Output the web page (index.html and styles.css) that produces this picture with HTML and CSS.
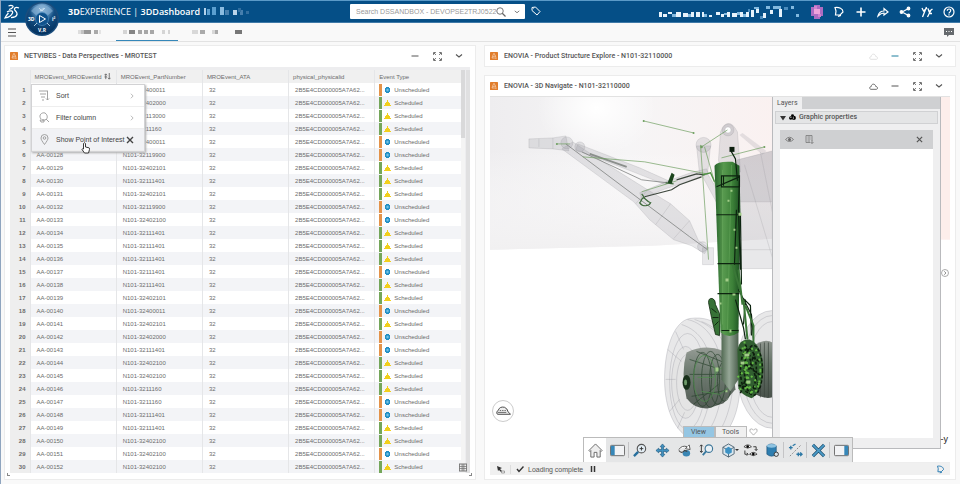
FILE: index.html
```html
<!DOCTYPE html>
<html lang="en">
<head>
<meta charset="utf-8">
<title>3DDashboard</title>
<link rel="stylesheet" href="styles.css">
</head>
<body>
<svg class="defs" aria-hidden="true">
  <symbol id="app" viewBox="0 0 16 16"><rect width="16" height="16" rx="1" fill="#e17d2b"/><path d="M8 2.500 10.500 7 12 11.500M8 2.500 5.500 7 4 12h5M6 9l5-1M9 12l4 1" fill="none" stroke="#fbe3cf" stroke-width="1.200"/></symbol>
  <symbol id="minus" viewBox="0 0 16 16"><path d="M1 8h14" stroke="currentColor" stroke-width="2"/></symbol>
  <symbol id="expand" viewBox="0 0 16 16"><path d="M1 5V1h4M11 1h4v4M15 11v4h-4M5 15H1v-4M2 2l3 3M14 2l-3 3M14 14l-3-3M2 14l3-3" fill="none" stroke="currentColor" stroke-width="1.600"/></symbol>
  <symbol id="down" viewBox="0 0 16 16"><path d="M2 5l6 5 6-5" fill="none" stroke="currentColor" stroke-width="2.200"/></symbol>
  <symbol id="right" viewBox="0 0 16 16"><path d="M5 2l6 6-6 6" fill="none" stroke="currentColor" stroke-width="1.800"/></symbol>
  <symbol id="cloud" viewBox="0 0 16 16"><path d="M3 13C0 12 1 8 4 8 4 3 11 2 12 8c4 0 4 5 1 5z" fill="none" stroke="currentColor" stroke-width="1.500"/></symbol>
  <symbol id="close" viewBox="0 0 16 16"><path d="M2 2l12 12M14 2L2 14" stroke="currentColor" stroke-width="2.800"/></symbol>
  <symbol id="lens" viewBox="0 0 20 20"><circle cx="8" cy="8" r="6.500" fill="none" stroke="currentColor" stroke-width="1.800"/><path d="M12.500 12.500l6.500 6.500" stroke="currentColor" stroke-width="2.400"/></symbol>
  <symbol id="tag" viewBox="0 0 20 20"><path d="M2 3l7-1 9 9-6 7-10-9zM5 5l1 1" fill="none" stroke="currentColor" stroke-width="2"/></symbol>
</svg>

<header class="topbar">
  <svg class="ds" viewBox="0 0 32 32" role="img" aria-label="Dassault Systèmes"><path d="M9 4c5-2 10-1 9 2-1 2-4 4-8 5M6 16c6-4 13-3 11 2-2 5-8 9-15 10 2-4 4-7 7-10M30 8c-5-2-10-1-9 3 1 3 6 5 5 10-1 4-7 6-12 6" fill="none" stroke="#fff" stroke-width="2.500"/></svg>
  <button class="compass" type="button" aria-label="Compass">
    <svg viewBox="0 0 34 34">
      <defs><radialGradient id="ball" cx="50%" cy="20%" r="80%"><stop offset="0" stop-color="#93b9d9"/><stop offset=".32" stop-color="#4c83b2"/><stop offset=".5" stop-color="#144e82"/><stop offset="1" stop-color="#02305d"/></radialGradient></defs>
      <circle cx="17" cy="17" r="17" fill="#1a4d7d"/><circle cx="17" cy="17" r="15.500" fill="url(#ball)"/>
      <path d="M6 9Q17-4 28 9L22 14Q17 9 12 14z" fill="#8db6d8" opacity=".55"/>
      <circle cx="17" cy="17" r="6.500" fill="#0f528c" stroke="#4889bd" stroke-width=".7"/>
      <path d="M14.500 13.500v7l6-3.500z" fill="none" stroke="#fff" stroke-width="1"/>
      <path d="M14 6l3 3 3-3M15 9l4-3M9 24l3-3M25 24l-3-3" stroke="#cfe4f5" stroke-width=".8" fill="none"/>
      <text x="3" y="19" class="c-t">3D</text><text x="27" y="19" class="c-t">i²</text><text x="13" y="30" class="c-t">V,R</text>
    </svg>
  </button>
  <div class="brand"><b>3D</b>EXPERIENCE | <strong>3DDashboard</strong></div>
  <svg class="mask-a" viewBox="0 0 46 9" aria-hidden="true"><path d="M0 1h2v7H0z" fill="#b4d3ec"/><path d="M3 2h3v6H3zM8 0h4v8H8z" fill="#5b9fd0"/><path d="M16 0h4v8h-4z" fill="#8abbe0"/><path d="M21 3h4v5h-4zM36 3h3v5h-3z" fill="#467fae"/><path d="M29 3h4v5h-4z" fill="#b9d4ea"/><path d="M34 1h3v4h-3zM42 4h3v3h-3z" fill="#316e9f"/></svg>
  <form class="search">
    <input type="text" aria-label="Search" placeholder="Search DSSANDBOX - DEVOPSE2TRJ0522">
    <button type="button" aria-label="Run search"><svg class="i10"><use href="#lens"/></svg></button>
    <button type="button" aria-label="Search options"><svg class="i6"><use href="#down"/></svg></button>
  </form>
  <button class="tag" type="button" aria-label="Tags"><svg class="i10"><use href="#tag"/></svg></button>
  <svg class="mask-b" viewBox="0 0 142 14" aria-hidden="true"><path d="M0 7h3v5H0zM4 9h4v3H4zM9 7h4v2H9zM17 7h5v5h-5zM24 8h5v4h-5zM32 7h3v5h-3zM37 7h4v5h-4zM43 7h2v5h-2zM50 10h3v2h-3zM57 7h4v3h-4zM62 9h3v3h-3zM68 7h3v5h-3zM73 8h5v4h-5zM81 7h3v5h-3zM87 7h3v5h-3zM92 5h3v7h-3zM97 4h3v4h-3zM104 8h3v5h-3zM111 5h3v4h-3zM120 4h3v8h-3z" fill="#e6f2fb"/><path d="M13 9h4v3h-4zM29 9h3v3h-3zM45 9h3v3h-3zM65 8h3v2h-3zM78 7h3v3h-3zM84 9h3v3h-3zM95 2h5v2h-5zM107 1h4v3h-4zM114 1h8v3h-8zM132 1h3v3h-3zM137 9h3v3h-3z" fill="#82b9df"/><path d="M101 11h3v3h-3zM125 2h4v3h-4zM89 4h2v3h-2z" fill="#4b8cbd"/></svg>
  <nav class="tools" aria-label="Account">
    <button type="button" aria-label="Profile"><svg class="i14" viewBox="0 0 14 14"><path d="M4 0h6v2h3v9h-3v3H4v-3H1V2h3z" fill="#ad6cc2"/><path d="M4 4h6v5H4z" fill="#f0a3dc"/><path d="M4 1h3v3H4zM8 9h3v3H8z" fill="#d184cf"/></svg></button>
    <button type="button" aria-label="Notifications"><svg class="i12" viewBox="0 0 12 12"><path d="M2 1.500c4-.5 8 1 8 4.500L7 9H2.500L3 5zM5 10.500l3-1" /></svg></button>
    <button type="button" aria-label="Add"><svg class="i12" viewBox="0 0 12 12"><path d="M6 1.500v9M1.500 6h9" stroke-width="1.600"/></svg></button>
    <button type="button" aria-label="Share"><svg class="i12" viewBox="0 0 12 12"><path d="M1 10c1-4 3-5 6-5V2.500L11 6 7 9V7C4 7 3 8 1 10z"/></svg></button>
    <button type="button" aria-label="Connections"><svg class="i12" viewBox="0 0 12 12"><path d="M9.500 2.500 3 6l6.500 3.500"/><circle cx="9.500" cy="2.500" r="1.300" fill="#fff"/><circle cx="2.500" cy="6" r="1.300" fill="#fff"/><circle cx="9.500" cy="9.500" r="1.300" fill="#fff"/></svg></button>
    <button type="button" aria-label="Communities"><svg class="i12" viewBox="0 0 12 12"><path d="M1 2l1.500 3L6 2M5.500 1 1.500 11M7 2.500l1 3L11.500 3M10 4 6.500 11M9 7.500h2" stroke-width="1.300"/></svg></button>
    <button type="button" aria-label="Help"><svg class="i12" viewBox="0 0 12 12"><circle cx="6" cy="6" r="5"/><path d="M4.300 4.800c0-2.500 3.600-2.300 3.400-.1C7.600 6 6 6 6 7.500M6 8.300v1.200"/></svg></button>
  </nav>
</header>

<nav class="tabs" aria-label="Dashboard tabs">
  <button class="burger" type="button" aria-label="Menu"><svg viewBox="0 0 8 9"><path d="M0 1h8M0 4.500h8M0 8h8" stroke="#555" stroke-width="1.200"/></svg></button>
  <a class="tab t1" href="#" aria-label="Tab one"><svg viewBox="0 0 24 4"><path d="M0 0h3v4H0z" fill="#ddd"/><path d="M3 0h3v4H3z" fill="#c3c3c3"/><path d="M6 0h7v4H6z" fill="#979797"/><path d="M16 0h4v4h-4z" fill="#aaa"/><path d="M21 0h2v4h-2z" fill="#e4e4e4"/></svg></a>
  <a class="tab t2" href="#" aria-current="page" aria-label="Tab two"><svg viewBox="0 0 48 4"><path d="M0 0h4v4H0zM39 0h3v4h-3zM45 0h2v4h-2z" fill="#d5d5d5"/><path d="M6 0h6v4H6z" fill="#858585"/><path d="M15 0h4v4h-4zM21 0h4v4h-4zM27 0h4v4h-4z" fill="#a7a7a7"/></svg></a>
  <a class="tab t3" href="#" aria-label="Tab three"><svg viewBox="0 0 26 4"><path d="M0 0h6v4H0zM20 0h3v4h-3z" fill="#d8d8d8"/><path d="M8 0h5v4H8zM23 0h3v4h-3z" fill="#aaa"/></svg></a>
  <a class="tab t4" href="#" aria-label="Tab four"><svg viewBox="0 0 7 4"><path d="M0 0h7v4H0z" fill="#777"/></svg></a>
  <button class="chat" type="button" aria-label="Comments"><svg viewBox="0 0 10 9"><path d="M0 0h10v7H5L3 9V7H0z" fill="#666a6e"/><path d="M2 3.500h1M4.500 3.500h1M7 3.500h1" stroke="#fff"/></svg></button>
</nav>

<main class="board">
  <section class="widget left">
    <header class="w-head"><svg class="i8"><use href="#app"/></svg><h2>NETVIBES - Data Perspectives - MROTEST</h2>
      <button type="button" aria-label="Minimize"><svg class="i8"><use href="#minus"/></svg></button><button type="button" aria-label="Maximize"><svg class="i9"><use href="#expand"/></svg></button><button type="button" aria-label="Widget menu"><svg class="i8"><use href="#down"/></svg></button></header>
    <div class="grid">
      <table>
        <colgroup><col class="c-n"><col><col><col><col><col></colgroup>
        <thead><tr><th></th><th>MROEvent_MROEventId <svg class="sort" viewBox="0 0 8 8"><path d="M2 1v6M.5 2.500 2 1 3.500 2.500M.5 4.500h3M6 0v7M4.500 5.500 6 7l1.500-1.500" fill="none" stroke="#666"/></svg></th><th>MROEvent_PartNumber</th><th>MROEvent_ATA</th><th>physical_physicalid</th><th>Event Type</th></tr></thead>
        <tbody>
          <tr><td>1</td><td></td><td>N101-32400011</td><td>32</td><td>2B5E4CD000005A7A62...</td><td class="u">Unscheduled</td></tr>
          <tr><td>2</td><td></td><td>N101-32402000</td><td>32</td><td>2B5E4CD000005A7A62...</td><td class="s">Scheduled</td></tr>
          <tr><td>3</td><td></td><td>N101-32113000</td><td>32</td><td>2B5E4CD000005A7A62...</td><td class="s">Scheduled</td></tr>
          <tr><td>4</td><td></td><td>N101-3211160</td><td>32</td><td>2B5E4CD000005A7A62...</td><td class="s">Scheduled</td></tr>
          <tr><td>5</td><td></td><td>N101-32400011</td><td>32</td><td>2B5E4CD000005A7A62...</td><td class="u">Unscheduled</td></tr>
          <tr><td>6</td><td>AA-00128</td><td>N101-32119900</td><td>32</td><td>2B5E4CD000005A7A62...</td><td class="u">Unscheduled</td></tr>
          <tr><td>7</td><td>AA-00129</td><td>N101-32402101</td><td>32</td><td>2B5E4CD000005A7A62...</td><td class="s">Scheduled</td></tr>
          <tr><td>8</td><td>AA-00130</td><td>N101-32111401</td><td>32</td><td>2B5E4CD000005A7A62...</td><td class="s">Scheduled</td></tr>
          <tr><td>9</td><td>AA-00131</td><td>N101-32402101</td><td>32</td><td>2B5E4CD000005A7A62...</td><td class="s">Scheduled</td></tr>
          <tr><td>10</td><td>AA-00132</td><td>N101-32119900</td><td>32</td><td>2B5E4CD000005A7A62...</td><td class="u">Unscheduled</td></tr>
          <tr><td>11</td><td>AA-00133</td><td>N101-32402100</td><td>32</td><td>2B5E4CD000005A7A62...</td><td class="u">Unscheduled</td></tr>
          <tr><td>12</td><td>AA-00134</td><td>N101-32111401</td><td>32</td><td>2B5E4CD000005A7A62...</td><td class="s">Scheduled</td></tr>
          <tr><td>13</td><td>AA-00135</td><td>N101-32111401</td><td>32</td><td>2B5E4CD000005A7A62...</td><td class="s">Scheduled</td></tr>
          <tr><td>14</td><td>AA-00136</td><td>N101-32111401</td><td>32</td><td>2B5E4CD000005A7A62...</td><td class="s">Scheduled</td></tr>
          <tr><td>15</td><td>AA-00137</td><td>N101-32111401</td><td>32</td><td>2B5E4CD000005A7A62...</td><td class="u">Unscheduled</td></tr>
          <tr><td>16</td><td>AA-00138</td><td>N101-32111401</td><td>32</td><td>2B5E4CD000005A7A62...</td><td class="s">Scheduled</td></tr>
          <tr><td>17</td><td>AA-00139</td><td>N101-32402101</td><td>32</td><td>2B5E4CD000005A7A62...</td><td class="s">Scheduled</td></tr>
          <tr><td>18</td><td>AA-00140</td><td>N101-32400011</td><td>32</td><td>2B5E4CD000005A7A62...</td><td class="u">Unscheduled</td></tr>
          <tr><td>19</td><td>AA-00141</td><td>N101-32402101</td><td>32</td><td>2B5E4CD000005A7A62...</td><td class="s">Scheduled</td></tr>
          <tr><td>20</td><td>AA-00142</td><td>N101-32402000</td><td>32</td><td>2B5E4CD000005A7A62...</td><td class="u">Unscheduled</td></tr>
          <tr><td>21</td><td>AA-00143</td><td>N101-32111401</td><td>32</td><td>2B5E4CD000005A7A62...</td><td class="u">Unscheduled</td></tr>
          <tr><td>22</td><td>AA-00144</td><td>N101-32402100</td><td>32</td><td>2B5E4CD000005A7A62...</td><td class="s">Scheduled</td></tr>
          <tr><td>23</td><td>AA-00145</td><td>N101-32402100</td><td>32</td><td>2B5E4CD000005A7A62...</td><td class="s">Scheduled</td></tr>
          <tr><td>24</td><td>AA-00146</td><td>N101-3211160</td><td>32</td><td>2B5E4CD000005A7A62...</td><td class="s">Scheduled</td></tr>
          <tr><td>25</td><td>AA-00147</td><td>N101-3211160</td><td>32</td><td>2B5E4CD000005A7A62...</td><td class="u">Unscheduled</td></tr>
          <tr><td>26</td><td>AA-00148</td><td>N101-32111401</td><td>32</td><td>2B5E4CD000005A7A62...</td><td class="u">Unscheduled</td></tr>
          <tr><td>27</td><td>AA-00149</td><td>N101-32111401</td><td>32</td><td>2B5E4CD000005A7A62...</td><td class="s">Scheduled</td></tr>
          <tr><td>28</td><td>AA-00150</td><td>N101-32402100</td><td>32</td><td>2B5E4CD000005A7A62...</td><td class="s">Scheduled</td></tr>
          <tr><td>29</td><td>AA-00151</td><td>N101-32402100</td><td>32</td><td>2B5E4CD000005A7A62...</td><td class="u">Unscheduled</td></tr>
          <tr><td>30</td><td>AA-00152</td><td>N101-32402100</td><td>32</td><td>2B5E4CD000005A7A62...</td><td class="s">Scheduled</td></tr>
        </tbody>
      </table>
      <div class="rail"><span></span></div>
      <div class="rail outer"></div>
      <div class="menu">
        <button type="button"><svg class="i11" viewBox="0 0 11 11"><path d="M0 1h9M1 4h6M2 7h4M3 10h2M8.500 1v9M7 8.500l1.500 1.500L10 8.500"/></svg>Sort<svg class="i6 end"><use href="#right"/></svg></button>
        <button type="button"><svg class="i11" viewBox="0 0 11 11"><path d="M2 7C-1 3 3 0 6 1c3 2 3 6 0 7H3M7 7l3 3M1 8h4v2H2z"/></svg>Filter column<svg class="i6 end"><use href="#right"/></svg></button>
        <button type="button" class="hover"><svg class="i11" viewBox="0 0 11 11"><path d="M5.500 10.500C3 7 2 5.500 2 4a3.500 3.500 0 0 1 7 0c0 1.500-1 3-3.500 6.500z"/><circle cx="5.500" cy="4" r="1.300"/></svg>Show Point of Interest<svg class="i8 x"><use href="#close"/></svg></button>
        <svg class="hand" viewBox="0 0 9 12"><path d="M2.500 7V1.500q1-1.500 2 0V5l3.500.8q.7 0 .5 1.700L7.500 11H3.500L1 7.500q.3-1.200 1.500-.5z" fill="#fff" stroke="#222" stroke-width=".9"/></svg>
      </div>
      <svg class="corner" viewBox="0 0 9 9"><path d="M0 0h9v9H0z" fill="#777"/><path d="M1 1h2v2H1zM4 1h1v2H4zM6 1h2v2H6zM1 4h2v1H1zM4 4h1v1H4zM6 4h2v1H6zM1 6h2v2H1zM4 6h1v2H4zM6 6h2v2H6z" fill="#eee"/></svg>
    </div>
    <i class="grip gl"></i><i class="grip gr"></i>
  </section>

  <div class="col">
    <section class="widget">
      <header class="w-head"><svg class="i8"><use href="#app"/></svg><h2>ENOVIA - Product Structure Explore - N101-32110000</h2>
        <button type="button" class="faint" aria-label="Connection"><svg class="i9"><use href="#cloud"/></svg></button><button type="button" class="blue" aria-label="Restore"><svg class="i8"><use href="#minus"/></svg></button><button type="button" aria-label="Maximize"><svg class="i9"><use href="#expand"/></svg></button><button type="button" aria-label="Widget menu"><svg class="i8"><use href="#down"/></svg></button></header>
    </section>
    <section class="widget nav3d">
      <header class="w-head"><svg class="i8"><use href="#app"/></svg><h2>ENOVIA - 3D Navigate - N101-32110000</h2>
        <button type="button" aria-label="Connection"><svg class="i9"><use href="#cloud"/></svg></button><button type="button" aria-label="Minimize"><svg class="i8"><use href="#minus"/></svg></button><button type="button" aria-label="Maximize"><svg class="i9"><use href="#expand"/></svg></button><button type="button" aria-label="Widget menu"><svg class="i8"><use href="#down"/></svg></button></header>
      <div class="stage">
        <svg class="model" viewBox="490 97 461 366" preserveAspectRatio="xMinYMin slice" role="img" aria-label="Landing gear model">
          <defs>
            <linearGradient id="sky"><stop offset="0" stop-color="#eeedef"/><stop offset=".3" stop-color="#f6f5f6"/><stop offset=".7" stop-color="#fbf0ef"/><stop offset="1" stop-color="#fdeeec"/></linearGradient>
            <radialGradient id="glow"><stop offset="0" stop-color="#fff"/><stop offset="1" stop-color="#fff" stop-opacity="0"/></radialGradient>
            <linearGradient id="fade" x1="0" y1="0" x2="0" y2="1"><stop offset="0" stop-color="#fff" stop-opacity="0"/><stop offset=".7" stop-color="#f5f4f5" stop-opacity=".7"/><stop offset="1" stop-color="#f1f0f1"/></linearGradient>
            <linearGradient id="tube"><stop offset="0" stop-color="#27632c"/><stop offset=".35" stop-color="#57994e"/><stop offset=".7" stop-color="#3c8038"/><stop offset="1" stop-color="#1c4f21"/></linearGradient>
            <linearGradient id="chrome"><stop offset="0" stop-color="#526a53"/><stop offset=".45" stop-color="#96a797"/><stop offset="1" stop-color="#4c604e"/></linearGradient>
            <linearGradient id="drum" x1="0" y1="0" x2="0" y2="1"><stop offset="0" stop-color="#8f968f"/><stop offset=".4" stop-color="#667468"/><stop offset="1" stop-color="#49524b"/></linearGradient>
          </defs>
          <path d="M490 97h461v143l-178-1-120 7-163 4z" fill="url(#sky)"/>
          <ellipse cx="597" cy="108" rx="60" ry="48" fill="url(#glow)"/>
          <path d="M490 150h283v89l-120 7-163 4z" fill="url(#fade)"/>
          <g fill="#8d8d96" fill-opacity=".2" stroke="#8a8a92" stroke-opacity=".35" stroke-width=".6">
            <path d="M738 160 773 151v118H738z"/><path d="M738 160 773 151v51h-35z" stroke="none"/><path d="M745 165l28 93M761 152l12 60M738 202h35M738 250h35"/>
            <path d="M740 135l3-2 24 18-4 4z" stroke="none"/>
            <path d="M719 160l2-28q8-17 17 0l3 40h-20z"/><circle cx="728.500" cy="130" r="6"/><circle cx="728.500" cy="130" r="3" fill="#fff" fill-opacity="1"/>
            <path d="M529 139l24-1 13-2 3 15-16-2-24-1z"/><path d="M539 139v8M553 138v11"/>
            <circle cx="567" cy="143" r="6"/><circle cx="580" cy="147" r="5"/>
            <path d="M562 149 573 142 600 160 648 190 671 204 690 221 699 241 709 248 705 254 692 246 674 240 650 220 634 202 600 177z"/>
            <path d="M648 190l-12 14M671 204l-15 21M690 221l-16 18"/>
            <path d="M578 144l62 24 29 13-3 4-30-12-60-23z"/>
            <path d="M640 193l26-11 25-9 16-4 2 5-22 8-24 8-21 9z"/>
            <circle cx="704" cy="145" r="7.500"/><path d="M697 146l3 28h8l3-28z"/><path d="M708 174l17 28-5 6-18-33z"/>
            <path d="M703 248h11v17h-11z"/><circle cx="703" cy="247" r="5"/>
          </g>
          <path d="M566 144 690 237 708 250M582 152l60 28 26 3" fill="none" stroke="#7f8280" stroke-width=".8"/>
          <path d="M590 154l37 13" stroke="#8b8f8c" stroke-width="2"/>
          <g fill="none" stroke="#6f9f60" stroke-width=".7"><path d="M644 121l50 12M583 157l62 5 62 12M701 145l8 115M705 147l20 70M702 147l26-17M722 158l43-11M557 144l13 0M642 192l35-11"/></g>
          <g fill="#6f9f60"><circle cx="644" cy="121" r="1"/><circle cx="694" cy="133" r="1"/><circle cx="765" cy="147" r="1"/><circle cx="702" cy="147" r="1.300"/><circle cx="557" cy="144" r="1"/></g>
          <path d="M641 202c3-9 5 0 10 1-2 4-8 4-11 0zM642 194l3 4M666 183l8 1" fill="none" stroke="#3f6a3c" stroke-width="1.200"/>
          <path d="M668 183l4-10 3 2-3 9z" fill="#1c451d"/>
          <path d="M645 197l27-7 8-5 22-8M677 180l20-6 8 1" fill="none" stroke="#3c463c" stroke-width="1.200"/>
          <path d="M703 175l8-2 4 9" stroke="#4d9141" stroke-width="1.300" fill="none"/>
          <g fill="#c7c7cb" fill-opacity=".42" stroke="#8b8b93" stroke-opacity=".42" stroke-width=".7">
            <ellipse cx="773" cy="370" rx="36" ry="59"/><ellipse cx="773" cy="370" rx="30" ry="54" fill="none"/><ellipse cx="773" cy="370" rx="24" ry="48" fill="none"/>
            <path d="M690 319c28-4 45 15 50 53 3 30-6 58-20 67h-30c-17-9-26-34-25-64 1-29 10-53 25-56z"/>
            <path d="M695 320c20 6 37 25 39 54 0 33-11 58-20 65M702 322c20 8 36 25 37 53M688 320c19 4 34 25 35 54 0 33-9 55-20 64M682 325c19 6 30 24 30 50 0 33-9 50-16 62" fill="none"/>
            <ellipse cx="688" cy="382" rx="18" ry="48" fill="none"/><ellipse cx="686" cy="383" rx="14" ry="36" fill="#ddd"/><ellipse cx="688" cy="383" rx="11" ry="28" fill="none"/>
            <path d="M668 350l14 12M666 380h10M670 412l10-12M678 429l7-16M676 332l8 18" fill="none"/>
          </g>
          <path d="M756 345q10-6 17-2v55q-8 2-17-3z" fill="url(#drum)"/><path d="M761 344v54M765 343v55M769 343v55" stroke="#3b443c" stroke-width=".7"/>
          <path d="M687 353q18-9 36-2l10 18 3 21-12 14-15 5q-14 1-22-10-6-26 0-46z" fill="url(#drum)" opacity=".93"/>
          <g fill="none" stroke="#26402a" stroke-width=".8" opacity=".8"><ellipse cx="703" cy="380" rx="9" ry="27"/><ellipse cx="711" cy="380" rx="9" ry="28"/><ellipse cx="718" cy="380" rx="8" ry="25"/><ellipse cx="725" cy="382" rx="7" ry="20"/><path d="M690 360l25 8M692 397l35-6M697 352l30 12M690 375h38M694 405l25-20"/></g>
          <g fill="none" stroke="#4e8f4c" stroke-width=".9" opacity=".8"><ellipse cx="705" cy="379" rx="11" ry="23"/><path d="M698 378h16l5-8 5-2M702 392l18 3 11-8"/></g>
          <ellipse cx="687" cy="383" rx="4" ry="7.500" fill="#18301a"/><ellipse cx="686" cy="383" rx="1.500" ry="3" fill="#6d9a69"/>
          <path d="M722 330h17v50l-8 12-9-12z" fill="url(#chrome)"/>
          <path d="M715 166q3-5 18-4l7 4 1 47-2 120q-9 7-18 0z" fill="url(#tube)"/>
          <path d="M723 170v155M732 165l-4 165" stroke="#76b568" stroke-width=".6" opacity=".7"/>
          <g fill="none" stroke="#0c230f" stroke-width="1.200"><path d="M722 176h18v11h-18zM724 176v10M717 187l23-10M717 215h24M718 264h23M718 294h22M722 331h17"/><path d="M732 148v4l4 7 2 22M740 180l-1 30 2 60M737 210l-2 55M741 215l1 70M739 290l13 25 2 24M742 297l9 9 1 30M736 300l8 28 2 12M746 300l-2 25"/></g>
          <path d="M730 147h5v5h-5z" fill="#0c1e0e"/>
          <path d="M709 303q0-5 4-4 3 1 3 6l4 9v22l-4-1-4-17z" fill="#377237" stroke="#10280f" stroke-width=".8"/><path d="M712 309l5 4M713 318h6M715 326l4-4" stroke="#10280f"/>
          <path d="M746 306l8 20v18M733 265l9 30M739 270l4 35M744 300l4 40" stroke="#3a7737" stroke-width="2" fill="none"/>
          <path d="M738 350q2-11 12-10 12 4 14 28-1 25-12 31-10-3-13-10z" fill="#315e30"/>
          <g fill="none" stroke="#0d1d0d" stroke-width="1.600" stroke-dasharray="3 2"><ellipse cx="754" cy="371" rx="9" ry="25"/><ellipse cx="749" cy="371" rx="8" ry="22"/><path d="M740 350l20 12M742 362l19 14M739 386l20 4M741 394l14-40M746 345l14 45"/></g>
          <g fill="none" stroke="#63b944" stroke-width="2" stroke-dasharray="2 3"><ellipse cx="754" cy="371" rx="7" ry="22"/><path d="M743 348l9 48M745 342l3 50M738 378l18-17M741 366l20 20M740 390l16-3"/></g>
          <g fill="#a2cc88"><path d="M728 200h2v2h-2zM734 229h2v2h-2zM726 279h3v3h-3zM730 330h2v3h-2zM745 354h5v3h-5zM741 362h4v3h-4zM739 213h3v3h-3zM731 190h2v2h-2zM736 247h2v2h-2zM733 294h3v2h-3zM720 303h2v2h-2zM716 368h3v4h-3zM747 381h4v3h-4zM726 391h2v2h-2z"/></g>
          <path d="M942 97h9v142h-9z" fill="#fdeeeb"/>
        </svg>
        <aside class="layers">
          <div class="l-tabs"><button type="button">Layers</button></div>
          <button class="acc" type="button"><svg class="i6" viewBox="0 0 6 6"><path d="M0 1h6L3 5.500z" fill="#333"/></svg><svg class="i7" viewBox="0 0 8 8"><circle cx="2" cy="4.500" r="2"/><circle cx="5.500" cy="4.500" r="2.400"/><circle cx="4" cy="2" r="1.700"/><path d="M1 4h2M5 3v3" stroke="#ddd" stroke-width=".7"/></svg>Graphic properties</button>
          <div class="l-body">
            <div class="l-tools">
              <button type="button" aria-label="Visibility"><svg class="i9" viewBox="0 0 9 9"><path d="M.5 4.500q4-4.500 8 0-4 4-8 0z" fill="none" stroke="#777" stroke-width=".9"/><circle cx="4.500" cy="4.500" r="1.500" fill="#666"/></svg></button>
              <button type="button" aria-label="Add layer"><svg class="i9" viewBox="0 0 9 9"><path d="M1 .5h6v5M1 .5v7h4M2.500 2h3M2.500 4h3M2.500 6H5M7 5v3.500M5.500 7 7 8.500 8.500 7" fill="none" stroke="#777" stroke-width=".8"/></svg></button>
              <button class="push" type="button" aria-label="Close"><svg class="i7"><use href="#close"/></svg></button>
            </div>
          </div>
        </aside>
        <span class="axis">-y</span>
        <button class="next" type="button" aria-label="Next"><svg viewBox="0 0 8 8"><circle cx="4" cy="4" r="3.500" fill="#fff" stroke="#888" stroke-width=".7"/><path d="M3.200 2.300 5 4 3.200 5.700" fill="none" stroke="#777" stroke-width=".8"/></svg></button>
        <button class="helmet" type="button" aria-label="Assistant"><svg viewBox="0 0 16 10"><path d="M1 8q-1-2 1.500-4Q4 0 9 1q3 1 4 5l2.500 2.500H2z" fill="#eee" stroke="#444" stroke-width="1"/><path d="M4 4.500h1.500M6.500 4.500H8M9 4.500h1.500M2 6.500h9" stroke="#555" stroke-width=".9"/></svg></button>
        <div class="bar">
          <div class="b-tabs"><button type="button" class="on">View</button><button type="button">Tools</button><svg class="heart" viewBox="0 0 10 9"><path d="M5 8 1.200 4Q0 1 2.500 1 4 1 5 2.500 6 1 7.500 1 10 1 8.800 4z" fill="#fff" stroke="#999" stroke-width=".8"/></svg></div>
          <div class="b-row">
            <button class="home" type="button" aria-label="Home"><svg viewBox="0 0 16 16"><path d="M1 8 8 1l7 7-1 1-1-1v7H9.500v-5h-3v5H3V8L2 9z" fill="#eee" stroke="#666"/></svg></button>
            <button type="button" aria-label="Left panel"><svg viewBox="0 0 16 16"><rect x=".5" y="2.500" width="15" height="11" rx="1" fill="#f2f3f5" stroke="#666"/><path d="M1 3h4v10H1z" fill="#3687b8"/></svg></button>
            <hr>
            <button type="button" aria-label="Fit all"><svg viewBox="0 0 16 16"><circle cx="9" cy="6" r="4.500" fill="#e3edf4" stroke="#555" stroke-width="1.200"/><path d="M7 6h4M9 4v4" stroke="#333"/><path d="M5.500 9.500 1 14" stroke="#276f9d" stroke-width="2.500"/></svg></button>
            <button type="button" aria-label="Pan"><svg viewBox="0 0 16 16"><path d="M8 1l2.500 3H9v3h3V5.500L15 8l-3 2.500V9H9v3h1.500L8 15l-2.500-3H7V9H4v1.500L1 8l3-2.500V7h3V4H5.500z" fill="#4294c4" stroke="#1d587e" stroke-width=".7"/></svg></button>
            <button type="button" aria-label="Rotate"><svg viewBox="0 0 16 16"><path d="M2 7q3-5 9-3l-2 2 5 1-1-5-1 1" fill="#fff" stroke="#555"/><ellipse cx="10" cy="11" rx="4" ry="3.500" fill="#3a86b4"/><path d="M2 8q3 4 6 0l3 1" fill="none" stroke="#444" stroke-width="1.300"/></svg></button>
            <button type="button" aria-label="Zoom"><svg viewBox="0 0 16 16"><circle cx="10.500" cy="6" r="4" fill="#eaf1f6" stroke="#3d7698" stroke-width="1.200"/><path d="M7.500 9 4 13" stroke="#37799f" stroke-width="2"/><path d="M2.500 2v8M1 3.500 2.500 2 4 3.500M1 8.500 2.500 10 4 8.500" fill="none" stroke="#333"/></svg></button>
            <button type="button" aria-label="Views"><svg viewBox="0 0 16 16"><path d="M8 1l6 3.500v7L8 15l-6-3.500v-7zM2 4.500 8 8l6-3.500M8 8v7" fill="#d9e6ee" stroke="#536977"/><path d="M8 4l3.500 2v4L8 12l-3.500-2V6z" fill="#3d92c4"/></svg><i class="drop"></i></button>
            <button type="button" aria-label="Hide or show"><svg viewBox="0 0 16 16"><path d="M1 4q4-4 8 0-4 3-8 0zM7 12q4-4 8 0-4 3-8 0z" fill="#fff" stroke="#444"/><circle cx="5" cy="3.800" r="1.400"/><circle cx="11" cy="11.800" r="1.400"/><path d="M11 4h3v4M12.500 6.500 14 8l1.500-1.500M2 8v4h3M4 10.500 5.500 12 4 13.500" fill="none" stroke="#333"/></svg></button>
            <button type="button" aria-label="Data"><svg viewBox="0 0 16 16"><path d="M2 3q5-4 10 0v9q-5 4-10 0z" fill="#2e7eb0" stroke="#1e5377" stroke-width=".7"/><ellipse cx="7" cy="3" rx="5" ry="2" fill="#8fc3e1"/><circle cx="12" cy="12" r="2.300" fill="#d8e2e9" stroke="#333"/></svg></button>
            <hr>
            <button type="button" aria-label="Measure"><svg viewBox="0 0 16 16"><path d="M2 14 14 2" stroke="#888" stroke-dasharray="2 1.500"/><path d="M1 5h4M3 3v4M5 3l3-2M9 12h6M11 10v4M13 10l2 2-2 2" stroke="#2d78a5" stroke-width="1.400" fill="none"/></svg></button>
            <hr>
            <button type="button" aria-label="Section"><svg viewBox="0 0 16 16"><path d="M2 2l12 12M14 2 2 14" stroke="#1f4f6e" stroke-width="3.400"/><path d="M2 2l12 12M14 2 2 14" stroke="#4b9cc9" stroke-width="1.800"/></svg></button>
            <hr>
            <button type="button" aria-label="Right panel"><svg viewBox="0 0 16 16"><rect x=".5" y="2.500" width="15" height="11" rx="1" fill="#f2f3f5" stroke="#666"/><path d="M11 3h4v10h-4z" fill="#3687b8"/></svg></button>
          </div>
        </div>
      </div>
      <footer class="status">
        <svg class="i9" viewBox="0 0 9 9"><path d="M1 1l5 2-2 1 2 2-1 1-2-2-1 1z" fill="#333"/><path d="M5.500 6h3v2h-3z" fill="none" stroke="#888" stroke-width=".7"/></svg>
        <span class="load"><svg class="i8" viewBox="0 0 8 8"><path d="M1 4l2 2.500L7.500 1.500" fill="none" stroke="#333" stroke-width="1.400"/></svg>Loading complete<svg class="i6" viewBox="0 0 6 6"><path d="M1.500 0v6M4.500 0v6" stroke="#333" stroke-width="1.500"/></svg></span>
        <button type="button" aria-label="Notifications"><svg class="i9" viewBox="0 0 12 12"><path d="M2 1.500c4-.5 8 1 8 4.500L7 9H2.500L3 5zM5 10.500l3-1" fill="none" stroke="#2b7cb3" stroke-width="1.300"/></svg></button>
      </footer>
    </section>
  </div>
</main>
</body>
</html>
```
FILE: styles.css
```css
* { box-sizing: border-box; }
body {
  margin: 0;
  min-height: 100vh;
  display: flex;
  flex-direction: column;
  background: #f9f9f9;
  border-left: 1px solid #8fa5bf;
  font: 7px/9px "Liberation Sans", Arial, sans-serif;
  color: #555;
}
button { margin: 0; padding: 0; border: 0; background: none; font: inherit; color: inherit; }
svg { display: block; flex: none; }
.defs { position: absolute; width: 0; height: 0; }
.i6 { width: 6px; height: 6px; }
.i7 { width: 7px; height: 7px; }
.i8 { width: 8px; height: 8px; }
.i9 { width: 9px; height: 9px; }
.i10 { width: 10px; height: 10px; }
.i11 { width: 11px; height: 11px; }
.i12 { width: 12px; height: 12px; }
.i14 { width: 14px; height: 14px; }

/* top bar */
.topbar {
  position: relative;
  display: flex;
  align-items: center;
  height: 23px;
  background: #054f87;
  border-top: 1px solid #5b9ac8;
  border-bottom: 1px solid #3f7aa8;
  color: #fff;
}
.ds { width: 16px; height: 16px; margin-left: 3px; }
.compass { position: absolute; left: 24px; top: 1px; width: 34px; height: 34px; z-index: 2; }
.c-t { font: bold 5px "Open Sans", sans-serif; fill: #fff; }
.brand { margin-left: 48px; font: 9px/12px "Open Sans", sans-serif; white-space: nowrap; }
.brand strong { font-weight: 600; }
.mask-a { width: 46px; height: 9px; margin-left: 4px; }
.search {
  position: absolute;
  left: 349px;
  top: 3px;
  display: flex;
  align-items: center;
  width: 175px;
  height: 15px;
  padding-left: 6px;
  border-radius: 1px;
  background: #fff;
  color: #666;
}
.search input { width: 140px; padding: 0; border: 0; outline: 0; background: none; font: 7px/12px "Liberation Sans", Arial, sans-serif; }
.search input::placeholder { color: #999; opacity: 1; }
.search button + button { margin-left: 8px; }
.tag { position: absolute; left: 530px; top: 5px; }
.mask-b { width: 142px; height: 14px; margin-left: auto; margin-right: 5px; }
.tools { display: flex; }
.tools button { display: grid; place-items: center; width: 22px; }
.tools svg { fill: none; stroke: #fff; stroke-width: 1.2; }
.tools button:first-child svg { stroke: none; }

/* dashboard tabs */
.tabs { display: flex; height: 19px; border-bottom: 1px solid #e2e2e2; background: #f9f9f9; }
.burger { width: 20px; padding-left: 7px; }
.burger svg { width: 8px; height: 9px; }
.tab { display: grid; place-items: center; padding: 0 7px; }
.tab svg { height: 4px; }
.t1 { margin-left: 50px; }
.t1 svg { width: 24px; }
.t2 { margin-left: 7px; border-bottom: 1px solid #3587b9; }
.t2 svg { width: 48px; }
.t3 { margin-left: 7px; }
.t3 svg { width: 26px; }
.t4 { margin-left: 3px; }
.t4 svg { width: 7px; }
.chat { margin-left: auto; padding-right: 6px; }
.chat svg { width: 10px; height: 9px; }

/* board */
.board { flex: 1; display: grid; grid-template-columns: 1fr 1fr; gap: 8px; padding: 3px 4px 4px 3px; }
.widget { position: relative; background: #fff; border: 1px solid #ececec; }
.col { display: flex; flex-direction: column; gap: 8px; }
.w-head { display: flex; align-items: center; height: 20px; padding: 0 5px; }
.w-head h2 { flex: 1; margin: 0 0 0 6px; font: 500 7px/9px Roboto, sans-serif; color: #555; }
.w-head button { display: grid; place-items: center; width: 22px; }
.w-head .faint { color: #ddd; }
.w-head .blue { color: #1d7e9e; }

.grid { position: relative; display: flex; margin: 1px 5px 0; padding-top: 3px; background: #ededef; }
table { flex: 1; width: 100%; min-width: 0; table-layout: fixed; border-collapse: collapse; font-size: 6px; line-height: 8px; background: #fff; }
.c-n { width: 20px; }
th, td { height: 13px; padding: 0 0 0 6px; border-left: 1px solid #e5e6e8; text-align: left; white-space: nowrap; color: #6c6c6c; }
th { padding-left: 4px; background: #f0f0f0; font-weight: 400; }
th svg { display: inline-block; width: 7px; height: 7px; margin-left: 1px; vertical-align: middle; }
td:first-child, th:first-child { padding: 0 4px 0 0; border: 0; background: #eee; text-align: right; font-weight: 700; }
tbody tr:nth-child(even) { background: #f3f4f7; }
.u, .s { padding-left: 4px; background-repeat: no-repeat; background-position: 9px 4px; background-size: 7px 6px; }
.u { background-image: radial-gradient(circle, #8fd0ee 0, #1f8ec4 2px 3px, transparent 3px); }
.s { background-image: conic-gradient(from 150deg at 50% 0, #f2cf1d 60deg, transparent 0); }
.u::before, .s::before { content: ""; display: inline-block; width: 3px; height: 12px; margin-right: 12px; vertical-align: middle; background: #e3934a; }
.s::before { background: #74a65a; }
.rail { flex: none; width: 4px; background: #f4f4f4; }
.rail span { display: block; height: 68px; background: #d9d9da; }
.rail.outer { margin-left: 1px; background: #e0e0e1; }
.corner { position: absolute; right: 3px; bottom: 1px; width: 8px; height: 9px; }
.grip { position: absolute; bottom: 3px; width: 3px; height: 3px; border: 0 solid #888; border-bottom-width: 1px; }
.gl { left: 2px; border-left-width: 1px; }
.gr { right: 3px; border-right-width: 1px; }

.menu { position: absolute; left: 21px; top: 17px; width: 114px; background: #fff; border: 1px solid #d2d2d4; box-shadow: 1px 1px 2px #aaa; }
.menu button { display: flex; align-items: center; width: 100%; height: 22px; padding: 0 9px 0 7px; border-bottom: 1px solid #eee; color: #444; white-space: nowrap; }
.menu .i11 { margin-right: 6px; fill: none; stroke: #999; stroke-width: .9; }
.menu .end { margin-left: auto; color: #999; }
.menu .x { margin-left: 2px; }
.menu .hover { background: #f1f2f5; }
.hand { position: absolute; left: 49px; top: 57px; width: 9px; height: 12px; }

/* 3D view */
.nav3d { flex: 1; display: flex; flex-direction: column; }
.stage { position: relative; flex: 1; margin: 0 5px; overflow: hidden; border-top: 1px solid #e2e2e2; border-bottom: 1px solid #eee; }
.model { position: absolute; inset: 0; width: 100%; height: 100%; }
.layers { position: absolute; top: 0; right: 9px; bottom: 13px; width: 169px; display: flex; flex-direction: column; background: #efeff0; border: 1px solid #b9babd; border-top: 0; font: 7px/9px Roboto, sans-serif; }
.l-tabs { height: 12px; background: #cfd0d2; }
.l-tabs button { height: 12px; padding: 0 4px; background: #efeff0; }
.acc { display: flex; align-items: center; gap: 3px; height: 13px; margin: 2px; padding-left: 4px; border: 1px solid #d0d1d3; background: #e4e5e6; font-weight: 500; color: #555; }
.l-body { flex: 1; margin: 4px 7px 10px; background: #fff; }
.l-tools { display: flex; align-items: center; gap: 11px; height: 19px; padding: 0 10px 0 5px; background: #cfd0d2; }
.push { margin-left: auto; }
.axis { position: absolute; right: 2px; bottom: 18px; font-size: 9px; color: #222; }
.next { position: absolute; right: 1px; top: 172px; }
.next svg { width: 8px; height: 8px; }
.helmet { position: absolute; left: 2px; bottom: 40px; display: grid; place-items: center; width: 22px; height: 22px; border: 1px solid #ccc; border-radius: 50%; background: #fff; }
.helmet svg { width: 15px; height: 10px; }
.bar { position: absolute; left: 93px; bottom: 0; width: 270px; }
.b-tabs { display: flex; justify-content: center; align-items: center; padding-left: 4px; font: 7px/9px Roboto, sans-serif; }
.b-tabs button { width: 32px; height: 11px; border: 1px solid #bbb; border-bottom: 0; background: #f0f0f0; }
.b-tabs .on { background: #95c6e3; }
.heart { width: 9px; height: 8px; margin-left: 2px; }
.b-row { display: flex; height: 25px; border: 1px solid #bbb; border-bottom: 0; background: #e5e6e7; }
.b-row button { position: relative; flex: 1; display: grid; place-items: center; }
.b-row svg { width: 15px; height: 15px; }
.b-row .home { background: #fff; }
.b-row hr { width: 1px; margin: 4px 0; border: 0; background: #c4c4c6; }
.drop { position: absolute; right: 0; top: 11px; border: 2px solid transparent; border-top-color: #333; border-bottom: 0; }
.status { display: flex; align-items: center; height: 12px; margin: 0 5px 4px; padding: 0 5px 0 6px; background: #f0f0f0; }
.load { display: flex; align-items: center; gap: 4px; margin-left: 5px; padding-left: 5px; border-left: 1px solid #ddd; }
.load .i6 { margin-left: 3px; }
.status button { margin-left: auto; }
```
